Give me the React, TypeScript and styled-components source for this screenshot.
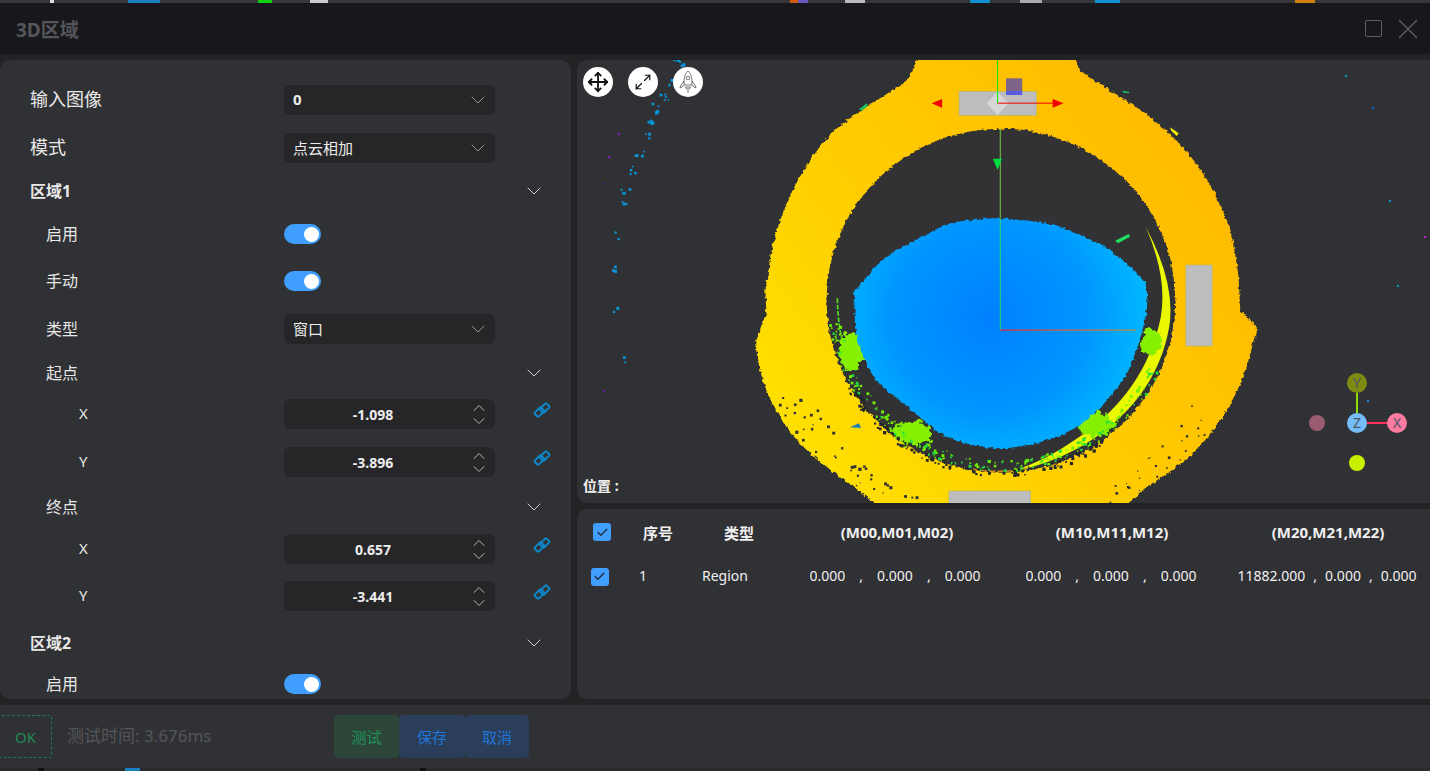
import React from "react";
import styled, { createGlobalStyle } from "styled-components";
import { ChevronDown, ChevronUp, Maximize2, Move, X as CloseIcon, Check } from "lucide-react";

const FONT = `"Noto Sans", "Noto Sans CJK SC", sans-serif`;

const GlobalStyle = createGlobalStyle`
  html, body { margin: 0; padding: 0; background: #222324; overflow: hidden; }
  * { box-sizing: border-box; }
`;

const Page = styled.div`
  width: 1430px;
  height: 771px;
  display: flex;
  flex-direction: column;
  overflow: hidden;
  font-family: ${FONT};
  color: #e6e6e6;
  background: #222324;
`;

const Strip = styled.div<{ $top?: boolean }>`
  flex: none;
  height: 3px;
  background: ${(p) =>
    p.$top
      ? `linear-gradient(90deg, #36373a 50px, #ddd 50px 54px, #36373a 54px 128px, #1c7fc0 128px 160px, #36373a 160px 258px, #10d010 258px 272px, #36373a 272px 310px, #ccc 310px 328px, #36373a 328px 790px, #d05a10 790px 798px, #6858c0 798px 808px, #36373a 808px 845px, #bbb 845px 865px, #36373a 865px 970px, #1090d0 970px 990px, #36373a 990px 1020px, #aaa 1020px 1042px, #36373a 1042px 1095px, #1090d0 1095px 1120px, #36373a 1120px 1295px, #d08010 1295px 1315px, #36373a 1315px)`
      : `linear-gradient(90deg, #2a2b2e 38px, #111 38px 44px, #2a2b2e 44px 125px, #1c7fc0 125px 140px, #2a2b2e 140px 420px, #111 420px 426px, #2a2b2e 426px)`};
`;

const TitleBar = styled.div`
  flex: none;
  height: 51px;
  background: #18181c;
  display: flex;
  align-items: center;
  justify-content: space-between;
  padding: 0 5px 0 16px;
`;

const Title = styled.div`
  font-size: 19px;
  font-weight: 700;
  color: #55565a;
`;

const WindowButtons = styled.div`
  display: flex;
  align-items: center;
  gap: 9px;
  color: #5c5d61;
`;

const MaxBox = styled.div`
  width: 17px;
  height: 17px;
  border: 1.5px solid #5c5d61;
  border-radius: 2px;
`;

const Main = styled.div`
  flex: none;
  height: 651px;
  display: flex;
  gap: 6px;
  padding: 6px 0;
`;

const SidePanel = styled.div`
  flex: none;
  width: 571px;
  height: 639px;
  background: #303134;
  border-radius: 10px;
  padding-top: 16px;
  overflow: hidden;
`;

const Row = styled.div<{ $h: number }>`
  height: ${(p) => p.$h}px;
  display: flex;
  align-items: center;
`;

const Label = styled.div<{ $indent: number; $size: number; $bold?: boolean }>`
  flex: none;
  width: 284px;
  padding-left: ${(p) => p.$indent}px;
  padding-bottom: ${(p) => (p.$size >= 18 ? 4 : p.$bold ? 3 : 2)}px;
  font-size: ${(p) => p.$size}px;
  font-weight: ${(p) => (p.$bold ? 700 : 400)};
  color: #e8e8e8;
  white-space: nowrap;
`;

const Field = styled.div<{ $center?: boolean }>`
  position: relative;
  flex: none;
  width: 211px;
  height: 30px;
  background: #262628;
  border-radius: 6px;
  display: flex;
  align-items: center;
  padding: ${(p) => (p.$center ? "0 33px 0 0" : "0 0 2px 9px")};
  justify-content: ${(p) => (p.$center ? "center" : "flex-start")};
  font-size: 14px;
  color: #ececec;
`;

const SelectValue = styled(Field)<{ $bold?: boolean }>`
  font-size: 15px;
  font-weight: ${(p) => (p.$bold ? 700 : 400)};
`;

const FieldChevron = styled.span`
  position: absolute;
  right: 5px;
  top: 3px;
  display: flex;
  color: #a2a2a5;
`;

const Spinner = styled.span`
  position: absolute;
  right: 6px;
  top: -1px;
  display: flex;
  flex-direction: column;
  color: #d0d0d2;

  svg + svg {
    margin-top: -7px;
  }
`;

const NumberText = styled.span`
  font-weight: 700;
  font-size: 14px;
`;

const SectionChevron = styled.span`
  flex: none;
  margin-left: 238px;
  display: flex;
  color: #dcdcdc;
`;

const LinkButton = styled.span`
  margin-left: 38px;
  margin-top: -8px;
  display: flex;
`;

const Toggle = styled.div`
  width: 37px;
  height: 20px;
  border-radius: 10px;
  background: #409eff;
  position: relative;

  &::after {
    content: "";
    position: absolute;
    right: 2px;
    top: 2.5px;
    width: 15px;
    height: 15px;
    border-radius: 50%;
    background: #fff;
  }
`;

const RightColumn = styled.div`
  flex: none;
  width: 865px;
  display: flex;
  flex-direction: column;
  gap: 6px;
`;

const Viewer = styled.div`
  position: relative;
  height: 443px;
  background: #303134;
  border-radius: 10px;
  overflow: hidden;
`;

const CloudLayer = styled.svg`
  position: absolute;
  left: 163px;
  top: -10px;
  width: 530px;
  height: 455px;
`;

const ScatterLayer = styled.svg`
  position: absolute;
  left: 0;
  top: 0;
  width: 853px;
  height: 443px;
`;

const ViewTools = styled.div`
  position: absolute;
  left: 6px;
  top: 7px;
  display: flex;
  gap: 15px;
`;

const ToolButton = styled.div`
  width: 30px;
  height: 30px;
  border-radius: 50%;
  background: #fff;
  color: #111;
  display: flex;
  align-items: center;
  justify-content: center;
`;

const Position = styled.div`
  position: absolute;
  left: 6px;
  top: 415px;
  font-size: 14px;
  font-weight: 700;
  color: #f0f0f0;
`;

const TablePanel = styled.div`
  height: 190px;
  background: #303134;
  border-radius: 10px;
  color: #f0f0f0;
`;

const HeadRow = styled.div`
  display: grid;
  grid-template-columns: 50px 62px 100px 216px 214px 218px;
  height: 46px;
  align-items: center;
  justify-items: center;
  font-size: 15px;
  font-weight: 700;
`;

const BodyRow = styled.div`
  display: grid;
  grid-template-columns: 45px 42px 122px 218px 214px 218px;
  height: 43px;
  align-items: center;
  justify-items: center;
  font-size: 14px;

  & > span {
    padding-bottom: 2px;
  }
`;

const CheckBox = styled.div`
  width: 18px;
  height: 18px;
  border-radius: 3px;
  background: #409eff;
  color: #1f2a3a;
  display: flex;
  align-items: center;
  justify-content: center;
`;

const Matrix = styled.div<{ $gap: number }>`
  display: flex;
  gap: ${(p) => p.$gap}px;
  white-space: nowrap;
  padding-bottom: 2px;
`;

const Footer = styled.div`
  flex: none;
  height: 63px;
  background: #303134;
  padding-top: 10px;
  display: flex;
  align-items: flex-start;
`;

const OkBox = styled.div`
  flex: none;
  width: 53px;
  height: 43px;
  margin-left: -1px;
  border: 1px dashed #1d7a4c;
  border-radius: 3px;
  color: #1f8a55;
  font-size: 15px;
  display: flex;
  align-items: center;
  justify-content: center;
`;

const Status = styled.div`
  flex: none;
  width: 282px;
  height: 43px;
  padding-left: 15px;
  line-height: 41px;
  font-size: 17px;
  color: #55565a;
`;

const ActionButton = styled.div<{ $tone: "green" | "blue"; $w: number }>`
  flex: none;
  width: ${(p) => p.$w}px;
  height: 43px;
  border-radius: 4px;
  display: flex;
  align-items: center;
  justify-content: center;
  font-size: 15px;
  background: ${(p) => (p.$tone === "green" ? "#2c463a" : "#2a3d59")};
  color: ${(p) => (p.$tone === "green" ? "#1d9455" : "#1f75d8")};
`;

const LinkIcon = () => (
  <svg width="18" height="18" viewBox="0 0 18 18" fill="none" stroke="#0f86c8" strokeWidth="2">
    <rect x="1.8" y="8.2" width="9" height="5.6" rx="1.2" transform="rotate(-45 6.3 11)" />
    <rect x="7.2" y="4.2" width="9" height="5.6" rx="1.2" transform="rotate(-45 11.7 7)" />
  </svg>
);

const RocketIcon = () => (
  <svg width="20" height="24" viewBox="0 0 20 24" fill="none" stroke="#555" strokeWidth="0.8">
    <path d="M10 1 C6.5 4 6 8 6 15 H14 C14 8 13.5 4 10 1 Z" />
    <circle cx="10" cy="8" r="1.8" />
    <path d="M6 11 L2.5 16 L2 18 L6 15.5 M14 11 L17.5 16 L18 18 L14 15.5" />
    <path d="M7.5 17 H12.5 L11.5 19 H8.5 Z M10 20 V23" />
  </svg>
);

// small seeded generator so the scatter stays the same on every load
const makeRandom = (seed: number) => () => {
  seed = (seed * 16807) % 2147483647;
  return (seed - 1) / 2147483646;
};

type Speck = { x: number; y: number; s: number };

const polar = (count: number, seed: number, from: number, to: number, r0: number, r1: number, cx: number, cy: number, s0: number, s1: number): Speck[] => {
  const rnd = makeRandom(seed);
  return Array.from({ length: count }, () => {
    const a = ((from + (to - from) * rnd()) * Math.PI) / 180;
    const r = r0 + (r1 - r0) * rnd();
    return { x: cx + Math.cos(a) * r, y: cy + Math.sin(a) * r, s: s0 + (s1 - s0) * rnd() };
  });
};

const holesLeft = polar(70, 11, 100, 155, 640, 730, 770, 740, 3, 10);
const holesRight = polar(40, 23, 30, 78, 650, 735, 770, 740, 3, 8);
const greenBits = polar(260, 37, 25, 172, 478, 512, 770, 750, 3, 9);
const darkBits = polar(120, 41, 55, 150, 505, 528, 770, 750, 4, 10);

const cyanTrail: [number, number, number][] = [
  [101, 3, 7], [95, 23, 5], [86, 38, 5], [78, 47, 6], [72, 62, 5], [68, 73, 4], [62, 92, 4], [56, 110, 4], [48, 132, 3], [45, 143, 3], [40, 175, 2], [35, 210, 3], [37, 250, 2], [43, 300, 2],
];

const rndDots = makeRandom(77);
const scatter: { x: number; y: number; c: string; s: number }[] = [
  ...cyanTrail.flatMap(([x, y, n]) =>
    Array.from({ length: n }, () => ({
      x: x + (rndDots() - 0.5) * 9,
      y: y + (rndDots() - 0.5) * 9,
      c: "#0a94d8",
      s: 1.5 + rndDots() * 1.8,
    })),
  ),
  { x: 41, y: 73, c: "#8a1ac0", s: 2 },
  { x: 31, y: 96, c: "#8a1ac0", s: 2 },
  { x: 27, y: 123, c: "#5a20a0", s: 1.5 },
  { x: 26, y: 330, c: "#5a20a0", s: 2 },
  { x: 768, y: 15, c: "#0a94d8", s: 2 },
  { x: 795, y: 47, c: "#0a6ac8", s: 2 },
  { x: 812, y: 140, c: "#0a94d8", s: 2 },
  { x: 847, y: 176, c: "#c020c0", s: 2 },
  { x: 820, y: 225, c: "#0a94d8", s: 2 },
  { x: 790, y: 340, c: "#0a94d8", s: 2 },
];

const Cloud = () => (
  <CloudLayer viewBox="0 0 1568 1365" preserveAspectRatio="none">
    <defs>
      <linearGradient id="ringFill" x1="0" y1="1" x2="1" y2="0.3">
        <stop offset="0" stopColor="#ffe600" />
        <stop offset="0.5" stopColor="#ffcc00" />
        <stop offset="1" stopColor="#ffb900" />
      </linearGradient>
      <radialGradient id="blueFill" gradientUnits="userSpaceOnUse" cx="740" cy="800" r="480">
        <stop offset="0" stopColor="#0080ff" />
        <stop offset="0.6" stopColor="#0096ff" />
        <stop offset="1" stopColor="#00baff" />
      </radialGradient>
      <linearGradient id="axisFade" x1="0" y1="0" x2="1" y2="0">
        <stop offset="0" stopColor="#a8406a" />
        <stop offset="1" stopColor="#8c9a78" />
      </linearGradient>
      <filter id="rough" x="-5%" y="-5%" width="110%" height="110%">
        <feTurbulence type="fractalNoise" baseFrequency="0.09" numOctaves="2" seed="4" />
        <feDisplacementMap in="SourceGraphic" scale="14" xChannelSelector="R" yChannelSelector="G" />
      </filter>
      <filter id="blobby" x="-40%" y="-40%" width="180%" height="180%">
        <feTurbulence type="fractalNoise" baseFrequency="0.06" numOctaves="2" seed="9" />
        <feDisplacementMap in="SourceGraphic" scale="36" xChannelSelector="R" yChannelSelector="G" />
      </filter>
    </defs>

    <g filter="url(#rough)">
      <path
        fill="url(#ringFill)"
        d="M525 20 Q515 65 490 95 L330 200 Q260 250 215 320 Q160 400 130 480 Q100 560 90 620 L75 720 L78 790 L45 880 Q55 950 70 1000 Q95 1065 130 1120 Q170 1180 220 1220 Q265 1260 310 1290 L420 1375 H1130 L1220 1300 Q1285 1260 1340 1210 Q1400 1150 1440 1080 Q1480 1010 1500 950 L1530 830 L1480 780 L1475 680 Q1465 600 1450 540 Q1430 480 1400 420 Q1355 340 1300 280 Q1250 230 1200 190 L1010 65 Q995 50 990 20 Z"
      />
      <circle cx="772" cy="752" r="516" fill="#303134" />
    </g>

    <path fill="#eaf800" d="M1200 530 Q1290 700 1270 830 Q1230 1060 1000 1195 Q900 1250 800 1265 Q900 1235 990 1170 Q1200 1030 1245 800 Q1265 680 1200 530 Z" />

    <path fill="none" stroke="#4ee020" strokeWidth="5" strokeDasharray="14 5" d="M288 745 Q290 830 305 880" />
    <path fill="none" stroke="#d08a20" strokeWidth="5" strokeDasharray="18 6" d="M690 1258 Q770 1272 850 1255" />

    <g filter="url(#blobby)" fill="#86f000">
      <ellipse cx="328" cy="905" rx="36" ry="58" />
      <ellipse cx="510" cy="1150" rx="58" ry="36" />
      <ellipse cx="1050" cy="1122" rx="52" ry="38" />
      <ellipse cx="1215" cy="875" rx="30" ry="42" />
    </g>
    {greenBits.map((b, i) => (
      <rect key={i} x={b.x} y={b.y} width={b.s} height={b.s} fill={i % 3 === 0 ? "#20e040" : "#70f000"} />
    ))}
    {darkBits.map((b, i) => (
      <rect key={i} x={b.x} y={b.y} width={b.s} height={b.s} fill="#26272a" />
    ))}

    <path
      filter="url(#rough)"
      fill="url(#blueFill)"
      d="M338 725 L400 650 Q440 610 480 590 L620 520 Q700 505 770 505 Q870 510 950 530 Q1020 560 1080 590 Q1150 640 1200 700 Q1210 750 1200 800 Q1180 900 1140 980 Q1080 1070 1000 1130 Q880 1195 760 1195 Q670 1190 590 1150 L400 990 Q355 920 340 830 Z"
    />

    {holesLeft.map((b, i) => (
      <rect key={i} x={b.x} y={b.y} width={b.s} height={b.s} fill="#303134" />
    ))}
    {holesRight.map((b, i) => (
      <rect key={i} x={b.x} y={b.y} width={b.s} height={b.s} fill="#303134" />
    ))}

    <path fill="#20e060" d="M1110 572 L1150 552 L1154 560 L1118 580 Z" />
    <path fill="#20c060" d="M352 178 L375 160 L378 168 L360 182 Z" />
    <path fill="#20c060" d="M1132 122 L1152 126 L1150 130 L1134 128 Z" />
    <path fill="#f4f000" d="M1272 232 L1298 250 L1292 258 L1276 242 Z" />
    <path fill="#1880b0" d="M325 1132 L352 1120 L358 1134 Z" />

    <g stroke="#b5b56a" strokeWidth="2" fill="#bdbdbd">
      <rect x="648" y="124" width="229" height="72" />
      <rect x="1319" y="645" width="78" height="243" />
      <rect x="618" y="1323" width="242" height="50" />
    </g>
    <path fill="#d6d6d6" d="M762 125 L795 160 L762 195 L730 160 Z" />
    <rect x="787" y="85" width="48" height="38" fill="#7d6488" />
    <rect x="787" y="123" width="48" height="12" fill="#5a5ae0" />
    <rect x="760.5" y="30" width="3" height="130" fill="#00f000" />
    <rect x="762" y="158" width="168" height="3" fill="#f00000" />
    <path fill="#f00000" d="M925 147 L957 160 L925 173 Z M567 160 L598 147 L598 173 Z" />
    <rect x="768.5" y="235" width="3" height="270" fill="#7cc84a" />
    <rect x="768.5" y="505" width="3" height="335" fill="#30d860" />
    <path fill="#00e040" d="M748 326 L775 326 L762 360 Z" />
    <rect x="770" y="838" width="402" height="5" fill="url(#axisFade)" />
  </CloudLayer>
);

const Gizmo = () => (
  <ScatterLayer viewBox="0 0 853 443">
    {scatter.map((d, i) => (
      <rect key={i} x={d.x} y={d.y} width={d.s} height={d.s} fill={d.c} />
    ))}
    <rect x="779" y="333" width="2" height="30" fill="#8fdc00" />
    <rect x="790" y="362" width="22" height="2" fill="#ff3060" />
    <circle cx="780" cy="323" r="10" fill="#7f8a12" />
    <circle cx="780" cy="363" r="10" fill="#75bdf9" />
    <circle cx="820" cy="363" r="10" fill="#fd7aa0" />
    <circle cx="740" cy="363" r="8" fill="#9a5c70" />
    <circle cx="780" cy="403" r="8" fill="#c6f000" />
    <g fontFamily="Noto Sans, sans-serif" fontSize="14" textAnchor="middle" fill="#4b5560">
      <text x="780" y="328">Y</text>
      <text x="780" y="368">Z</text>
      <text x="820" y="368">X</text>
    </g>
  </ScatterLayer>
);

const SelectRow = ({ h, label, indent, size, value, bold }: { h: number; label: string; indent: number; size: number; value: string; bold?: boolean }) => (
  <Row $h={h}>
    <Label $indent={indent} $size={size}>{label}</Label>
    <SelectValue $bold={bold}>
      {value}
      <FieldChevron><ChevronDown size={24} strokeWidth={0.9} /></FieldChevron>
    </SelectValue>
  </Row>
);

const SectionRow = ({ h, label, indent, size, bold }: { h: number; label: string; indent: number; size: number; bold?: boolean }) => (
  <Row $h={h}>
    <Label $indent={indent} $size={size} $bold={bold}>{label}</Label>
    <SectionChevron><ChevronDown size={24} strokeWidth={0.9} /></SectionChevron>
  </Row>
);

const ToggleRow = ({ h, label }: { h: number; label: string }) => (
  <Row $h={h}>
    <Label $indent={46} $size={16}>{label}</Label>
    <Toggle />
  </Row>
);

const NumberRow = ({ h, label, value }: { h: number; label: string; value: string }) => (
  <Row $h={h}>
    <Label $indent={79} $size={15}>{label}</Label>
    <Field $center>
      <NumberText>{value}</NumberText>
      <Spinner>
        <ChevronUp size={20} strokeWidth={1} />
        <ChevronDown size={20} strokeWidth={1} />
      </Spinner>
    </Field>
    <LinkButton><LinkIcon /></LinkButton>
  </Row>
);

const MatrixCell = ({ values, gap }: { values: string[]; gap: number }) => (
  <Matrix $gap={gap}>
    {values.map((v, i) => (
      <React.Fragment key={i}>
        {i > 0 && <span>,</span>}
        <span>{v}</span>
      </React.Fragment>
    ))}
  </Matrix>
);

export default function App() {
  return (
    <Page>
      <GlobalStyle />
      <Strip $top />
      <TitleBar>
        <Title>3D区域</Title>
        <WindowButtons>
          <MaxBox />
          <CloseIcon size={34} strokeWidth={1.05} />
        </WindowButtons>
      </TitleBar>
      <Main>
        <SidePanel>
          <SelectRow h={48} label="输入图像" indent={30} size={18} value="0" bold />
          <SelectRow h={48} label="模式" indent={30} size={18} value="点云相加" />
          <SectionRow h={38} label="区域1" indent={30} size={16} bold />
          <ToggleRow h={48} label="启用" />
          <ToggleRow h={46} label="手动" />
          <SelectRow h={50} label="类型" indent={46} size={16} value="窗口" />
          <SectionRow h={38} label="起点" indent={46} size={16} />
          <NumberRow h={44} label="X" value="-1.098" />
          <NumberRow h={52} label="Y" value="-3.896" />
          <SectionRow h={38} label="终点" indent={46} size={16} />
          <NumberRow h={46} label="X" value="0.657" />
          <NumberRow h={48} label="Y" value="-3.441" />
          <SectionRow h={46} label="区域2" indent={30} size={16} bold />
          <ToggleRow h={36} label="启用" />
        </SidePanel>
        <RightColumn>
          <Viewer>
            <Cloud />
            <Gizmo />
            <ViewTools>
              <ToolButton><Move size={22} strokeWidth={2} /></ToolButton>
              <ToolButton><Maximize2 size={18} strokeWidth={1.6} /></ToolButton>
              <ToolButton><RocketIcon /></ToolButton>
            </ViewTools>
            <Position>位置 :</Position>
          </Viewer>
          <TablePanel>
            <HeadRow>
              <CheckBox><Check size={13} strokeWidth={2.4} /></CheckBox>
              <span>序号</span>
              <span>类型</span>
              <span>(M00,M01,M02)</span>
              <span>(M10,M11,M12)</span>
              <span>(M20,M21,M22)</span>
            </HeadRow>
            <BodyRow>
              <CheckBox><Check size={13} strokeWidth={2.4} /></CheckBox>
              <span>1</span>
              <span>Region</span>
              <MatrixCell values={["0.000", "0.000", "0.000"]} gap={14} />
              <MatrixCell values={["0.000", "0.000", "0.000"]} gap={14} />
              <MatrixCell values={["11882.000", "0.000", "0.000"]} gap={8} />
            </BodyRow>
          </TablePanel>
        </RightColumn>
      </Main>
      <Footer>
        <OkBox>OK</OkBox>
        <Status>测试时间: 3.676ms</Status>
        <ActionButton $tone="green" $w={65}>测试</ActionButton>
        <ActionButton $tone="blue" $w={66}>保存</ActionButton>
        <ActionButton $tone="blue" $w={64}>取消</ActionButton>
      </Footer>
      <Strip />
    </Page>
  );
}
